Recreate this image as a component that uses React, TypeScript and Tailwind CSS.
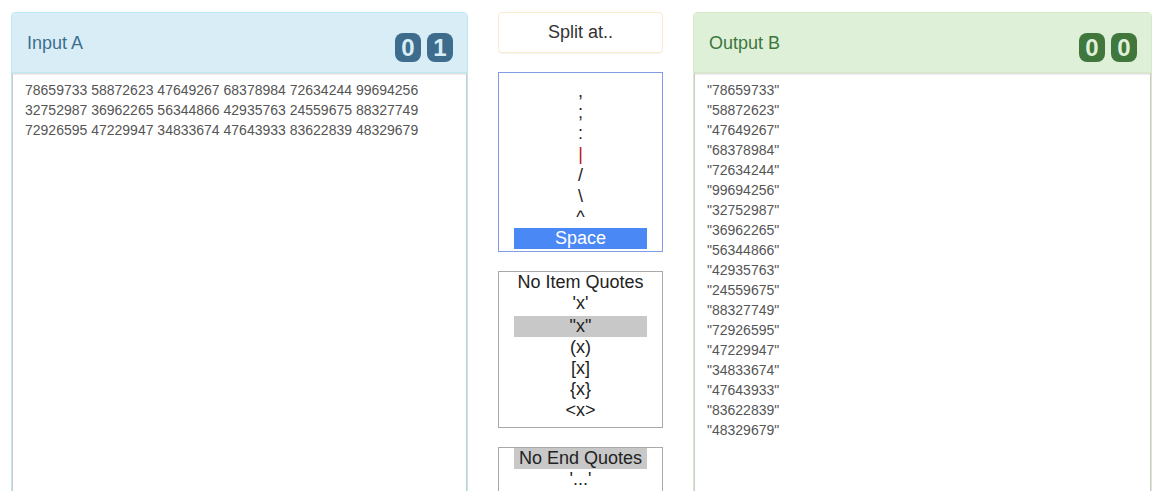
const inputText = [
  '78659733 58872623 47649267 68378984 72634244 99694256',
  '32752987 36962265 56344866 42935763 24559675 88327749',
  '72926595 47229947 34833674 47643933 83622839 48329679',
];

const outputLines = inputText.join(' ').split(' ').map((n) => `"${n}"`);

const splitOptions = [',', ';', ':', '|', '/', '\\', '^', 'Space'];
const itemQuotes = ['No Item Quotes', "'x'", '"x"', '(x)', '[x]', '{x}', '<x>'];
const endQuotes = ['No End Quotes', "'...'"];

function Badge({ value, color }: { value: string; color: 'info' | 'success' }) {
  const cls =
    color === 'info'
      ? 'bg-[#3d6c8d] text-[#d9edf7]'
      : 'bg-[#3f773c] text-[#dff0d8]';
  return (
    <span
      className={`${cls} w-[26px] h-[29px] rounded-[8px] flex items-center justify-center text-[24px] font-bold leading-none`}
    >
      {value}
    </span>
  );
}

function Panel({
  title,
  badges,
  color,
  children,
}: {
  title: string;
  badges: string[];
  color: 'info' | 'success';
  children: React.ReactNode;
}) {
  const isInfo = color === 'info';
  return (
    <div
      className={`flex flex-col h-[520px] rounded-[4px] border ${
        isInfo ? 'border-[#bce8f1]' : 'border-[#d6e9c6]'
      }`}
    >
      <div
        className={`h-[60px] shrink-0 flex justify-between pl-[15px] pr-[14px] rounded-t-[3px] border-b ${
          isInfo
            ? 'bg-[#d9edf7] text-[#3b6f8f] border-[#bce8f1]'
            : 'bg-[#dff0d8] text-[#3c763d] border-[#d6e9c6]'
        }`}
      >
        <h3 className="text-[18px] leading-none pt-[21px]">{title}</h3>
        <div className="flex gap-[6px] pt-[20px]">
          {badges.map((b, i) => (
            <Badge key={i} value={b} color={color} />
          ))}
        </div>
      </div>
      <div className="flex-1 border border-[#ccc] border-t-[#e0e0e0] shadow-[inset_0_1px_1px_rgba(0,0,0,0.075)] bg-white px-[12px] py-[6px] text-[14px] leading-[20px] text-[#555]">
        {children}
      </div>
    </div>
  );
}

function ListBox({
  items,
  selected,
  focused,
  selectedClass,
  height,
}: {
  items: string[];
  selected: string;
  focused?: boolean;
  selectedClass: string;
  height: string;
}) {
  return (
    <div
      className={`${height} shrink-0 overflow-hidden bg-white border ${
        focused ? 'border-[#7f9ce6] pt-[8px]' : 'border-[#a9a9a9]'
      } px-[15px] text-[18px] leading-[21px] text-[#222] text-center`}
    >
      {items.map((item) => (
        <div
          key={item}
          className={`h-[21px] ${item === selected ? selectedClass : ''} ${
            item === '|' ? 'text-[#b11]' : ''
          }`}
        >
          {item}
        </div>
      ))}
    </div>
  );
}

export default function App() {
  return (
    <div className="h-[491px] overflow-hidden bg-white pt-[12px] pl-[11px] pr-[13px] flex font-['Liberation_Sans',Arial,sans-serif]">
      <div className="w-[457px] shrink-0">
        <Panel title="Input A" badges={['0', '1']} color="info">
          {inputText.map((line) => (
            <div key={line}>{line}</div>
          ))}
        </Panel>
      </div>

      <div className="w-[165px] shrink-0 ml-[30px] flex flex-col">
        <div className="h-[41px] shrink-0 rounded-[4px] border border-[#faebcc] shadow-[0_1px_1px_rgba(0,0,0,0.05)] flex items-center justify-center text-[18px] text-[#333]">
          Split at..
        </div>
        <div className="mt-[19px] shrink-0">
          <ListBox
            items={splitOptions}
            selected="Space"
            focused
            selectedClass="bg-[#4a88f6] text-white"
            height="h-[180px]"
          />
        </div>
        <div className="mt-[19px] shrink-0">
          <ListBox
            items={itemQuotes}
            selected={'"x"'}
            selectedClass="bg-[#c8c8c8] mt-[2px]"
            height="h-[157px]"
          />
        </div>
        <div className="mt-[19px] shrink-0">
          <ListBox
            items={endQuotes}
            selected="No End Quotes"
            selectedClass="bg-[#c8c8c8]"
            height="h-[100px]"
          />
        </div>
      </div>

      <div className="w-[459px] shrink-0 ml-[30px]">
        <Panel title="Output B" badges={['0', '0']} color="success">
          {outputLines.map((line, i) => (
            <div key={i}>{line}</div>
          ))}
        </Panel>
      </div>
    </div>
  );
}
